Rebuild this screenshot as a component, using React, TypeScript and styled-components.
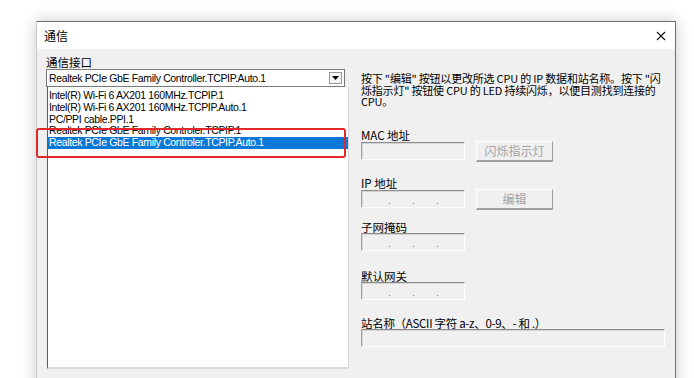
import React from "react";
import styled, { createGlobalStyle } from "styled-components";

const Global = createGlobalStyle`
  html, body { margin: 0; padding: 0; background: #ffffff; overflow: hidden; }
  body { font-family: "Liberation Sans", "Noto Sans CJK SC", sans-serif; font-size: 11px; color: #000; }
`;

const Page = styled.div`
  width: 694px;
  height: 378px;
  padding: 21px 0 0 36px;
  box-sizing: border-box;
  overflow: hidden;
  position: relative;
`;

const Dialog = styled.div`
  width: 640px;
  height: 380px;
  box-sizing: border-box;
  border: 1px solid #6f6f6f;
  border-left-color: #c8c8c8;
  background: #f0f0f0;
  box-shadow: 0 0 14px rgba(0, 0, 0, 0.22);
  display: flex;
  flex-direction: column;
`;

const TitleBar = styled.div`
  height: 27px;
  background: #ffffff;
  display: flex;
  align-items: center;
  justify-content: space-between;
  padding: 0 9px 0 7px;
  font-family: "Noto Sans CJK SC", sans-serif;
  font-size: 12px;
`;

const CloseIcon = styled.svg`
  width: 10px;
  height: 10px;
`;

const Body = styled.div`
  flex: 1;
  display: flex;
  gap: 13px;
  padding: 6px 0 0 9px;
`;

const LeftCol = styled.div`
  width: 302px;
  display: flex;
  flex-direction: column;
  position: relative;
`;

const Label = styled.div<{ $mt?: number; $tight?: boolean }>`
  font-family: "Noto Sans CJK SC", sans-serif;
  font-size: 11.5px;
  line-height: 12px;
  height: 12px;
  margin-top: ${(p) => p.$mt ?? 0}px;
  letter-spacing: ${(p) => (p.$tight ? "-0.3px" : "0")};
  white-space: nowrap;
`;

const Combo = styled.div`
  margin-top: 1px;
  width: 299px;
  height: 18px;
  box-sizing: border-box;
  border: 1px solid #7a7a7a;
  background: #fff;
  display: flex;
  align-items: center;
  justify-content: space-between;
  padding: 0 2px 0 2px;
`;

const ComboText = styled.span`
  font-size: 10.5px;
  letter-spacing: -0.35px;
  white-space: nowrap;
`;

const DropBtn = styled.div`
  width: 13px;
  height: 12px;
  box-sizing: border-box;
  border: 1px solid #9a9a9a;
  background: #f4f4f4;
  display: flex;
  align-items: center;
  justify-content: center;
`;

const ListBox = styled.div`
  width: 302px;
  height: 282px;
  box-sizing: border-box;
  background: #fff;
  border-left: 1px solid #5a5a5a;
  border-right: 1px solid #d8d8d8;
  border-bottom: 2px solid #dcdcdc;
  padding-top: 3px;
  margin-left: 1px;
`;

const Item = styled.div<{ $selected?: boolean }>`
  height: 11.75px;
  line-height: 11.75px;
  font-size: 10.5px;
  letter-spacing: -0.35px;
  padding-left: 1px;
  white-space: nowrap;
  background: ${(p) => (p.$selected ? "#0a78d7" : "transparent")};
  color: ${(p) => (p.$selected ? "#fff" : "#000")};
`;

const Highlight = styled.div`
  position: absolute;
  left: -10px;
  top: 73px;
  width: 310px;
  height: 30px;
  box-sizing: border-box;
  border: 2px solid #e2282b;
  border-radius: 3px;
  pointer-events: none;
`;

const RightCol = styled.div`
  width: 304px;
  display: flex;
  flex-direction: column;
  padding-top: 18px;
`;

const Desc = styled.div`
  font-family: "Noto Sans CJK SC", sans-serif;
  font-size: 11px;
  line-height: 11.5px;
  height: 11.5px;
  white-space: nowrap;
  letter-spacing: -0.2px;
`;

const Row = styled.div`
  display: flex;
  align-items: center;
  gap: 11px;
`;

const Field = styled.div<{ $w: number }>`
  width: ${(p) => p.$w}px;
  height: 18px;
  box-sizing: border-box;
  border-top: 1px solid #8a8a8a;
  border-left: 1px solid #a0a0a0;
  border-right: 1px solid #ffffff;
  border-bottom: 1px solid #ffffff;
  box-shadow: inset 1px 1px 0 #d6d6d6;
  background: #f0f0f0;
  display: flex;
  align-items: flex-end;
  padding: 0 0 3px 27px;
  gap: 23px;
`;

const Dot = styled.span`
  width: 1px;
  height: 1px;
  background: #7a7a7a;
`;

const Button = styled.div`
  width: 77px;
  height: 21px;
  box-sizing: border-box;
  border-top: 1px solid #ffffff;
  border-left: 1px solid #ffffff;
  border-right: 1px solid #a0a0a0;
  border-bottom: 2px solid #a0a0a0;
  background: #f0f0f0;
  display: flex;
  align-items: center;
  justify-content: center;
  color: #a4a4a4;
  font-family: "Noto Sans CJK SC", sans-serif;
  font-size: 12px;
`;

const IpField = () => (
  <Field $w={104}>
    <Dot />
    <Dot />
    <Dot />
  </Field>
);

export default function App() {
  return (
    <>
      <Global />
      <Page>
        <Dialog>
          <TitleBar>
            <span>通信</span>
            <CloseIcon viewBox="0 0 10 10">
              <path d="M1 1 L9 9 M9 1 L1 9" stroke="#111" strokeWidth="1.1" fill="none" />
            </CloseIcon>
          </TitleBar>
          <Body>
            <LeftCol>
              <Label $mt={1}>通信接口</Label>
              <Combo>
                <ComboText>Realtek PCIe GbE Family Controller.TCPIP.Auto.1</ComboText>
                <DropBtn>
                  <svg width="7" height="4" viewBox="0 0 7 4">
                    <path d="M0 0 H7 L3.5 4 Z" fill="#000" />
                  </svg>
                </DropBtn>
              </Combo>
              <ListBox>
                <Item>Intel(R) Wi-Fi 6 AX201 160MHz.TCPIP.1</Item>
                <Item>Intel(R) Wi-Fi 6 AX201 160MHz.TCPIP.Auto.1</Item>
                <Item>PC/PPI cable.PPI.1</Item>
                <Item>Realtek PCIe GbE Family Controler.TCPIP.1</Item>
                <Item $selected>Realtek PCIe GbE Family Controler.TCPIP.Auto.1</Item>
              </ListBox>
              <Highlight />
            </LeftCol>
            <RightCol>
              <Desc>按下 "编辑" 按钮以更改所选 CPU 的 IP 数据和站名称。按下 "闪</Desc>
              <Desc>烁指示灯" 按钮使 CPU 的 LED 持续闪烁，以便目测找到连接的</Desc>
              <Desc>CPU。</Desc>
              <Label $mt={21}>MAC 地址</Label>
              <Row>
                <Field $w={104} />
                <Button>闪烁指示灯</Button>
              </Row>
              <Label $mt={15}>IP 地址</Label>
              <Row>
                <IpField />
                <Button>编辑</Button>
              </Row>
              <Label $mt={11}>子网掩码</Label>
              <Row>
                <IpField />
              </Row>
              <Label $mt={19}>默认网关</Label>
              <Row>
                <IpField />
              </Row>
              <Label $mt={17} $tight>站名称（ASCII 字符 a-z、0-9、- 和 .）</Label>
              <Row>
                <Field $w={304} />
              </Row>
            </RightCol>
          </Body>
        </Dialog>
      </Page>
    </>
  );
}
